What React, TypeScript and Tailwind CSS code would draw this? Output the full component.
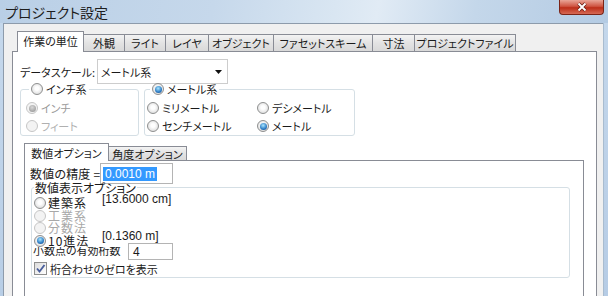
import React from "react";

const jp = "font-['Noto_Sans_CJK_JP',sans-serif] [font-feature-settings:'palt']";
const latin = "font-['Liberation_Sans',sans-serif]";

const outerTabs = [
  { label: "作業の単位", w: "w-[67px]", active: true },
  { label: "外観", w: "w-[42px]" },
  { label: "ライト", w: "w-[42px]" },
  { label: "レイヤ", w: "w-[44px]" },
  { label: "オブジェクト", w: "w-[66px]" },
  { label: "ファセットスキーム", w: "w-[100px]" },
  { label: "寸法", w: "w-[43px]" },
  { label: "プロジェクトファイル", w: "w-[102px]" },
];

const Radio = ({ checked, disabled }: { checked?: boolean; disabled?: boolean }) => (
  <span
    className={`flex h-[12px] w-[12px] shrink-0 items-center justify-center rounded-full border ${
      disabled
        ? "border-[#c6c6c6] bg-[#f3f3f3]"
        : "border-[#8e8f8f] bg-[radial-gradient(circle_at_50%_45%,#fefefe_25%,#d4d4d4_95%)]"
    }`}
  >
    {checked && (
      <span
        className={`h-[7px] w-[7px] rounded-full ${
          disabled
            ? "bg-[radial-gradient(circle_at_45%_35%,#d8d8d8,#8c8c8c)]"
            : "bg-[radial-gradient(circle_at_45%_35%,#a8e6ff,#2d7cc4_60%,#123f78)]"
        }`}
      />
    )}
  </span>
);

const Checkbox = () => (
  <span className="flex h-[13px] w-[13px] shrink-0 items-center justify-center border border-[#8e8f8f] bg-[linear-gradient(135deg,#dcdcdc,#ffffff)]">
    <svg width="11" height="11" viewBox="0 0 11 11">
      <path d="M2 5.5 L4.5 8.5 L9.5 2" fill="none" stroke="#4a5f9c" strokeWidth="1.9" />
    </svg>
  </span>
);

const CloseButton = () => (
  <div className="mr-[4px] flex h-[15px] w-[45px] items-center justify-center rounded-b-[4px] border border-t-0 border-[#7b2417] bg-[linear-gradient(#e9a597,#cf5542_45%,#bc2e19_55%,#d66a55)]">
    <svg width="12" height="10" viewBox="0 0 12 10">
      <path d="M2.5 1.5 L9.5 8.5 M9.5 1.5 L2.5 8.5" stroke="#6a1d12" strokeWidth="3.4" />
      <path d="M2.5 1.5 L9.5 8.5 M9.5 1.5 L2.5 8.5" stroke="#ffffff" strokeWidth="1.9" />
    </svg>
  </div>
);

export default function App() {
  return (
    <div className={`flex h-[296px] w-[608px] flex-col overflow-hidden whitespace-nowrap bg-[#bfd3e8] text-[#1a1a1a] ${jp}`}>
      <div className="flex h-[23px] shrink-0 items-start justify-between bg-[linear-gradient(100deg,#b9cfe6_0%,#c6d8eb_35%,#d9e6f2_55%,#e1ebf5_62%,#c4d7ea_78%,#b4cbe3_100%)]">
        <span className="pl-[5px] pt-[3px] text-[14px] leading-[18px] text-[#1e1e1e]">プロジェクト設定</span>
        <CloseButton />
      </div>
      <div className="flex flex-1 overflow-hidden">
        <div className="w-[3px] bg-[linear-gradient(#c5d8ec,#b8cee6)]" />
        <div className="flex-1 border-l border-t border-[#8d9bab] bg-[#f0f0f0] pl-[8px] pt-[7px]">
          <div className="flex w-[585px] flex-col">
            <div className="flex h-[20px] items-end pl-[5px]">
              {outerTabs.map((t, i) => (
                <div
                  key={t.label}
                  className={`${t.w} ${i > 0 ? "-ml-px" : ""} flex items-center justify-center border border-b-0 border-[#898c95] text-[11px] leading-[14px] ${
                    t.active
                      ? "relative z-10 -mb-px h-[21px] bg-white pb-[2px]"
                      : "h-[17px] bg-[linear-gradient(#f3f3f3,#e3e3e3_50%,#d9d9d9)]"
                  }`}
                >
                  {t.label}
                </div>
              ))}
            </div>
            <div className="h-[250px] border border-[#898c95] bg-white pt-[7px]">
              <div className="flex h-[25px] items-center pl-[7px]">
                <span className="w-[77px] text-[11px] leading-[14px]">データスケール:</span>
                <div className="flex h-[25px] w-[131px] items-center justify-between border border-[#cdcdcd] bg-white pl-[3px] pr-[5px]">
                  <span className="text-[11px] leading-[14px]">メートル系</span>
                  <svg width="7" height="4" viewBox="0 0 7 4">
                    <path d="M0 0 H7 L3.5 4 Z" fill="#111" />
                  </svg>
                </div>
              </div>

              <div className="-mt-[2px] flex gap-[5px] pl-[7px] text-[11px]">
                <fieldset className="w-[119px] rounded-[3px] border border-[#d5dfe5] pl-[5px]">
                  <legend className="ml-[3px] flex h-[14px] items-center gap-[3px] px-[2px] leading-[14px]">
                    <Radio />
                    <span>インチ系</span>
                  </legend>
                  <div className="pt-[3px]">
                    <div className="flex h-[18px] items-center gap-[3px] text-[#9a9a9a]">
                      <Radio checked disabled />
                      <span>インチ</span>
                    </div>
                    <div className="flex h-[18px] items-center gap-[3px] text-[#b0b0b0]">
                      <Radio disabled />
                      <span>フィート</span>
                    </div>
                  </div>
                </fieldset>

                <fieldset className="w-[211px] rounded-[3px] border border-[#d5dfe5] pl-[2px]">
                  <legend className="ml-[3px] flex h-[14px] items-center gap-[3px] px-[2px] leading-[14px]">
                    <Radio checked />
                    <span>メートル系</span>
                  </legend>
                  <div className="grid grid-cols-[110px_auto] pt-[3px]">
                    <div className="flex h-[18px] items-center gap-[3px]">
                      <Radio />
                      <span>ミリメートル</span>
                    </div>
                    <div className="flex h-[18px] items-center gap-[3px]">
                      <Radio />
                      <span>デシメートル</span>
                    </div>
                    <div className="flex h-[18px] items-center gap-[3px]">
                      <Radio />
                      <span>センチメートル</span>
                    </div>
                    <div className="flex h-[18px] items-center gap-[3px]">
                      <Radio checked />
                      <span>メートル</span>
                    </div>
                  </div>
                </fieldset>
              </div>

              <div className="ml-[11px] mt-[7px] flex w-[560px] flex-col">
                <div className="flex h-[17px] items-end text-[11px] leading-[14px]">
                  <div className="relative z-10 -mb-px flex h-[18px] w-[85px] items-center justify-center border border-b-0 border-[#898c95] bg-white">
                    数値オプション
                  </div>
                  <div className="-ml-px flex h-[14px] w-[79px] items-center justify-center border border-b-0 border-[#898c95] bg-[linear-gradient(#f3f3f3,#e3e3e3_50%,#d9d9d9)]">
                    角度オプション
                  </div>
                </div>
                <div className="h-[150px] border border-[#898c95] bg-white pt-[2px]">
                  <div className="flex items-center pl-[5px]">
                    <span className="w-[70px] text-[12px] leading-[14px] tracking-[0.2px]">数値の精度 =</span>
                    <div className="flex h-[21px] w-[73px] items-center border border-[#b4b4b4] bg-white pl-[2px]">
                      <span className={`h-[14px] bg-[#3399ff] px-[2px] text-[12px] leading-[14px] text-white ${latin}`}>0.0010 m</span>
                    </div>
                  </div>

                  <fieldset className="-mt-[4px] ml-[6px] w-[539px] rounded-[3px] border border-[#d5dfe5] pb-[2px]">
                    <legend className="ml-[2px] h-[15px] px-[1px] text-[12px] leading-[15px]">数値表示オプション</legend>
                    <div className="flex items-start">
                      <div className="w-[68px] pl-[2px] pt-[2px] text-[12px] tracking-[1px]">
                        <div className="flex h-[12.5px] items-center gap-[2px] leading-[12px]">
                          <Radio />
                          <span>建築系</span>
                        </div>
                        <div className="flex h-[12.5px] items-center gap-[2px] leading-[12px] text-[#a8a8a8]">
                          <Radio disabled />
                          <span>工業系</span>
                        </div>
                        <div className="flex h-[12.5px] items-center gap-[2px] leading-[12px] text-[#a8a8a8]">
                          <Radio disabled />
                          <span>分数法</span>
                        </div>
                        <div className="flex h-[12.5px] items-center gap-[2px] leading-[12px]">
                          <Radio checked />
                          <span>10進法</span>
                        </div>
                      </div>
                      <div className={`-mt-[2px] flex flex-col text-[12px] leading-[12px] ${latin}`}>
                        <span className="pl-[2px]">[13.6000 cm]</span>
                        <span className="mt-[25px] pl-[2px]">[0.1360 m]</span>
                      </div>
                    </div>

                    <div className="-mt-[4px] flex h-[17px] items-center pl-[1px]">
                      <div className="flex h-[9px] w-[95px] items-end overflow-hidden">
                        <span className="shrink-0 text-[11px] leading-[12px]">小数点の有効桁数</span>
                      </div>
                      <div className={`flex h-[17px] w-[45px] items-center border border-[#b4b4b4] bg-white pl-[4px] text-[12px] leading-[14px] ${latin}`}>
                        4
                      </div>
                    </div>

                    <div className="mt-[2px] flex h-[13px] items-center gap-[3px] pl-[2px] text-[11px] leading-[14px]">
                      <Checkbox />
                      <span>桁合わせのゼロを表示</span>
                    </div>
                  </fieldset>
                </div>
              </div>
            </div>
          </div>
        </div>
        <div className="w-[5px] border-l border-[#a9bccf] bg-[linear-gradient(#c4d7eb,#b6cce5)]" />
      </div>
    </div>
  );
}
